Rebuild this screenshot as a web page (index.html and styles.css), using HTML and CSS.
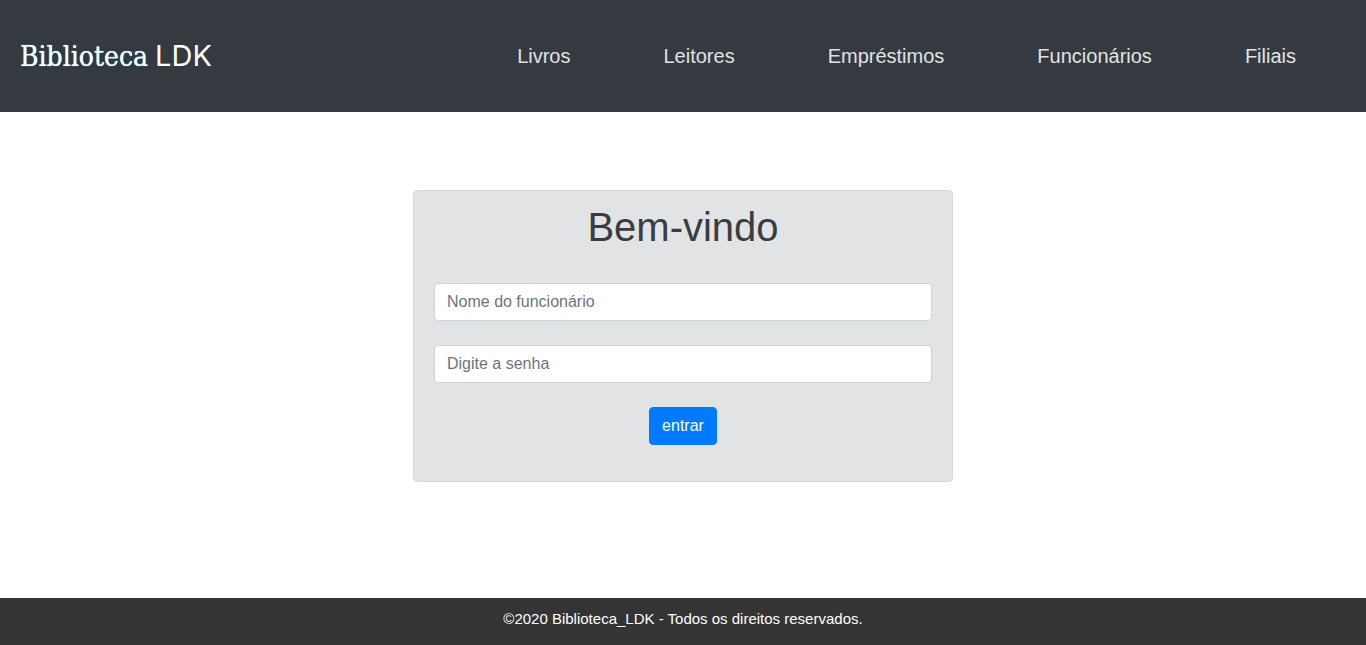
FILE: index.html
```html
<!DOCTYPE html>
<html lang="pt-BR">
<head>
<meta charset="utf-8">
<meta name="viewport" content="width=device-width, initial-scale=1">
<title>Biblioteca LDK</title>
<link rel="stylesheet" href="styles.css">
</head>
<body>
<header class="topbar">
  <a class="brand" href="#"><span class="brand-name">Biblioteca</span> <span class="brand-tag">LDK</span></a>
  <nav class="menu">
    <a href="#">Livros</a>
    <a href="#">Leitores</a>
    <a href="#">Empréstimos</a>
    <a href="#">Funcionários</a>
    <a href="#">Filiais</a>
  </nav>
</header>
<main class="content">
  <form class="card">
    <h1 class="title">Bem-vindo</h1>
    <input class="field" type="text" placeholder="Nome do funcionário" aria-label="Nome do funcionário">
    <input class="field" type="password" placeholder="Digite a senha" aria-label="Digite a senha">
    <button class="submit" type="button">entrar</button>
  </form>
</main>
<footer class="footer">©2020 Biblioteca_LDK - Todos os direitos reservados.</footer>
</body>
</html>
```
FILE: styles.css
```css
* { box-sizing: border-box; }

body {
  margin: 0;
  min-height: 100vh;
  display: flex;
  flex-direction: column;
  background: #fff;
  color: #383d41;
  font-family: "Liberation Sans", Arial, sans-serif;
  font-size: 16px;
  line-height: 24px;
}

.topbar {
  display: flex;
  align-items: center;
  justify-content: space-between;
  min-height: 112px;
  padding: 32px 24px 32px 20px;
  background: #343a40;
}

.brand {
  display: flex;
  align-items: baseline;
  gap: 7px;
  line-height: 32px;
  text-decoration: none;
  white-space: nowrap;
}

.brand-name {
  color: #f0ffff;
  font-family: "DejaVu Serif Condensed", "DejaVu Serif", serif;
  font-size: 28px;
  text-shadow: 0 0 1px #f0ffff, 0 0 3px #0b3350;
}

.brand-tag {
  color: #fff;
  font-family: Inter, sans-serif;
  font-size: 29px;
  font-weight: 400;
}

.menu {
  display: flex;
  gap: 1px;
}

.menu a {
  padding: 0 46px;
  color: #e1e2e3;
  font-size: 20px;
  line-height: 30px;
  text-decoration: none;
}

.content {
  flex: 1;
  display: flex;
  justify-content: center;
  align-items: flex-start;
  padding: 78px 16px 32px;
}

.card {
  display: flex;
  flex-direction: column;
  align-items: center;
  gap: 24px;
  width: 100%;
  max-width: 540px;
  padding: 12px 20px 36px;
  background: #e2e3e5;
  border: 1px solid #d6d8db;
  border-radius: 4px;
}

.title {
  margin: 0 0 8px;
  font-size: 40px;
  font-weight: 400;
  line-height: 48px;
}

.field {
  width: 100%;
  height: 38px;
  padding: 6px 12px;
  border: 1px solid #ced4da;
  border-radius: 4px;
  background: #fff;
  color: #495057;
  font: inherit;
}

.field::placeholder { color: #6c757d; opacity: 1; }

.submit {
  height: 38px;
  padding: 6px 12px;
  border: 1px solid #007bff;
  border-radius: 4px;
  background: #007bff;
  color: #fff;
  font: inherit;
  cursor: pointer;
}

.footer {
  padding: 9px 16px 14px;
  background: #343434;
  color: #fff;
  font-size: 15px;
  text-align: center;
}
```
